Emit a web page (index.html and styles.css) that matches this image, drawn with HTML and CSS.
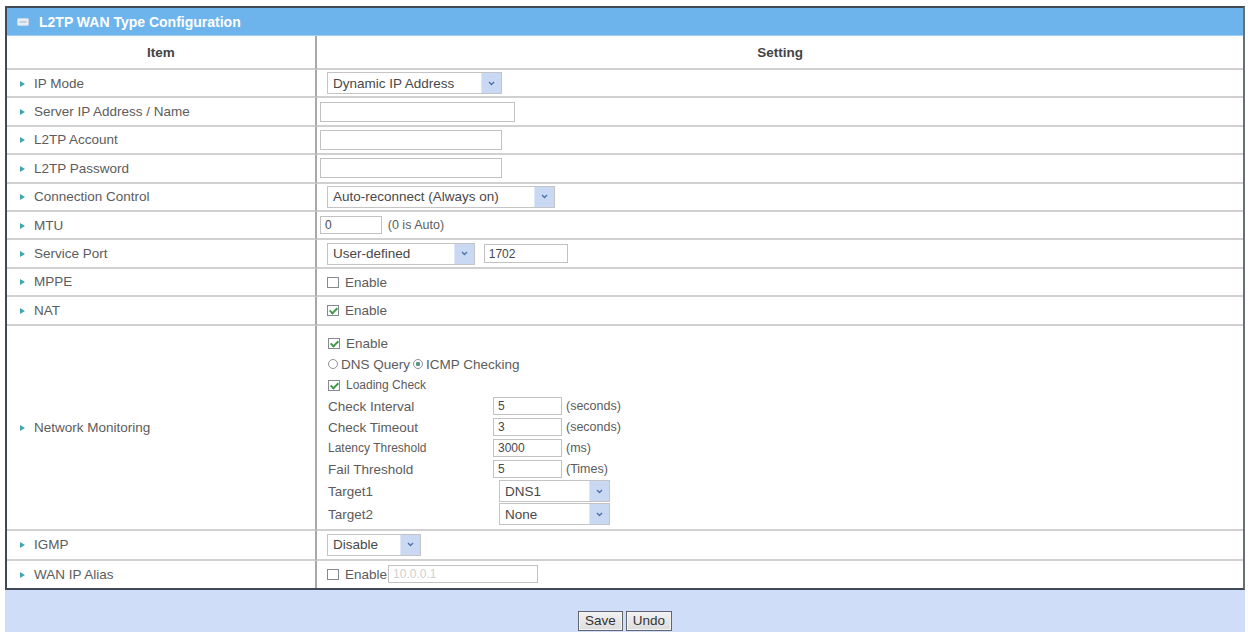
FILE: index.html
```html
<!DOCTYPE html>
<html lang="en">
<head>
    <meta charset="UTF-8">
    <title>L2TP WAN Type Configuration</title>
    <link rel="stylesheet" href="styles.css">
</head>
<body>
    <div class="panel">
        <div class="panel-title">
            <svg class="title-icon" width="12" height="8" viewBox="0 0 12 8">
                <rect x="0.5" y="0.5" width="11" height="7" rx="1" fill="#e8eef6" stroke="#c9d6e6"/>
                <line x1="2.5" y1="4" x2="9.5" y2="4" stroke="#9fb3cc" stroke-width="1"/>
            </svg>
            L2TP WAN Type Configuration
        </div>
        <table class="cfg">
            <thead>
                <tr>
                    <th class="col-item">Item</th>
                    <th>Setting</th>
                </tr>
            </thead>
            <tbody>
                <tr>
                    <td class="item"><span class="tri"></span>IP Mode</td>
                    <td class="set">
                        <span class="sel w-ipmode">
                            <select><option>Dynamic IP Address</option><option>Static IP Address</option></select>
                            <span class="sel-arrow"><svg width="7" height="5" viewBox="0 0 7 5"><path d="M1 1 L3.5 3.5 L6 1" fill="none" stroke="#4d6fae" stroke-width="1.3"/></svg></span>
                        </span>
                    </td>
                </tr>
                <tr>
                    <td class="item"><span class="tri"></span>Server IP Address / Name</td>
                    <td class="set"><input type="text" class="txt w-server"></td>
                </tr>
                <tr>
                    <td class="item"><span class="tri"></span>L2TP Account</td>
                    <td class="set"><input type="text" class="txt w-account"></td>
                </tr>
                <tr>
                    <td class="item"><span class="tri"></span>L2TP Password</td>
                    <td class="set"><input type="password" class="txt w-account"></td>
                </tr>
                <tr>
                    <td class="item"><span class="tri"></span>Connection Control</td>
                    <td class="set">
                        <span class="sel w-conn">
                            <select><option>Auto-reconnect (Always on)</option><option>Connect-on-demand</option><option>Connect Manually</option></select>
                            <span class="sel-arrow"><svg width="7" height="5" viewBox="0 0 7 5"><path d="M1 1 L3.5 3.5 L6 1" fill="none" stroke="#4d6fae" stroke-width="1.3"/></svg></span>
                        </span>
                    </td>
                </tr>
                <tr>
                    <td class="item"><span class="tri"></span>MTU</td>
                    <td class="set"><input type="text" class="txt w-mtu" value="0"> <span class="note">(0 is Auto)</span></td>
                </tr>
                <tr>
                    <td class="item"><span class="tri"></span>Service Port</td>
                    <td class="set">
                        <span class="sel w-port">
                            <select><option>User-defined</option><option>Default</option></select>
                            <span class="sel-arrow"><svg width="7" height="5" viewBox="0 0 7 5"><path d="M1 1 L3.5 3.5 L6 1" fill="none" stroke="#4d6fae" stroke-width="1.3"/></svg></span>
                        </span>
                        <input type="text" class="txt w-portnum" value="1702">
                    </td>
                </tr>
                <tr>
                    <td class="item"><span class="tri"></span>MPPE</td>
                    <td class="set"><label class="chk"><input type="checkbox"> Enable</label></td>
                </tr>
                <tr>
                    <td class="item"><span class="tri"></span>NAT</td>
                    <td class="set"><label class="chk"><input type="checkbox" checked> Enable</label></td>
                </tr>
                <tr class="row-nm">
                    <td class="item"><span class="tri"></span>Network Monitoring</td>
                    <td class="set">
                        <div class="nm">
                            <label class="chk nm-full"><input type="checkbox" checked> Enable</label>
                            <div class="nm-full radios">
                                <label><input type="radio" name="nmtype"> DNS Query</label>
                                <label><input type="radio" name="nmtype" checked> ICMP Checking</label>
                            </div>
                            <label class="chk nm-full small"><input type="checkbox" checked> Loading Check</label>

                            <span>Check Interval</span>
                            <input type="text" class="txt w-nm" value="5">
                            <span class="note">(seconds)</span>

                            <span>Check Timeout</span>
                            <input type="text" class="txt w-nm" value="3">
                            <span class="note">(seconds)</span>

                            <span class="small">Latency Threshold</span>
                            <input type="text" class="txt w-nm" value="3000">
                            <span class="note">(ms)</span>

                            <span>Fail Threshold</span>
                            <input type="text" class="txt w-nm" value="5">
                            <span class="note">(Times)</span>

                            <span>Target1</span>
                            <span class="nm-sel">
                                <span class="sel w-target">
                                    <select><option>DNS1</option><option>DNS2</option><option>Gateway</option><option>Other Host</option></select>
                                    <span class="sel-arrow"><svg width="7" height="5" viewBox="0 0 7 5"><path d="M1 1 L3.5 3.5 L6 1" fill="none" stroke="#4d6fae" stroke-width="1.3"/></svg></span>
                                </span>
                            </span>

                            <span>Target2</span>
                            <span class="nm-sel">
                                <span class="sel w-target">
                                    <select><option>None</option><option>DNS1</option><option>DNS2</option><option>Gateway</option></select>
                                    <span class="sel-arrow"><svg width="7" height="5" viewBox="0 0 7 5"><path d="M1 1 L3.5 3.5 L6 1" fill="none" stroke="#4d6fae" stroke-width="1.3"/></svg></span>
                                </span>
                            </span>
                        </div>
                    </td>
                </tr>
                <tr class="row-igmp">
                    <td class="item"><span class="tri"></span>IGMP</td>
                    <td class="set">
                        <span class="sel w-igmp">
                            <select><option>Disable</option><option>Auto</option></select>
                            <span class="sel-arrow"><svg width="7" height="5" viewBox="0 0 7 5"><path d="M1 1 L3.5 3.5 L6 1" fill="none" stroke="#4d6fae" stroke-width="1.3"/></svg></span>
                        </span>
                    </td>
                </tr>
                <tr class="row-last">
                    <td class="item"><span class="tri"></span>WAN IP Alias</td>
                    <td class="set">
                        <label class="chk"><input type="checkbox"> Enable</label><input type="text" class="txt w-alias" placeholder="10.0.0.1" disabled>
                    </td>
                </tr>
            </tbody>
        </table>
    </div>

    <div class="actions">
        <button type="button" class="btn">Save</button>
        <button type="button" class="btn">Undo</button>
    </div>
</body>
</html>
```

FILE: styles.css
```css
body {
    margin: 0;
    background: #ffffff;
    font-family: "Liberation Sans", Arial, sans-serif;
    font-size: 13.5px;
    color: #5c5c5c;
}

.panel {
    width: 1240px;
    margin: 6px 0 0 5px;
    border: 2px solid #3f4a55;
    border-right-color: #6a6f75;
    box-sizing: border-box;
}

.panel-title {
    display: flex;
    align-items: center;
    height: 28px;
    padding-left: 10px;
    background: #6db4ec;
    border-bottom: 1px solid #9fd0f5;
    box-sizing: border-box;
    color: #ffffff;
    font-size: 14px;
    font-weight: bold;
}

.title-icon {
    margin-right: 10px;
}

.cfg {
    width: 100%;
    border-collapse: separate;
    border-spacing: 0;
}

.cfg th {
    height: 32px;
    padding: 0;
    border-bottom: 2px solid #d0d0d0;
    color: #444444;
    font-size: 13.5px;
    font-weight: bold;
    text-align: center;
}

.cfg th.col-item {
    width: 308px;
    border-right: 2px solid #a8a8a8;
}

.cfg td {
    height: 26.4px;
    padding: 0;
    border-bottom: 2px solid #d0d0d0;
    vertical-align: middle;
    white-space: nowrap;
}

.cfg td.item {
    padding-left: 13px;
    border-right: 2px solid #a8a8a8;
}

.cfg td.set {
    padding-left: 3px;
}

.row-nm td {
    height: 203px;
}

.row-igmp td {
    height: 28px;
}

.row-last td {
    height: 27px;
    border-bottom: none;
}

.tri {
    display: inline-block;
    width: 0;
    height: 0;
    margin-right: 9px;
    border-top: 3.5px solid transparent;
    border-bottom: 3.5px solid transparent;
    border-left: 5px solid #44a6ac;
    vertical-align: 1px;
}

/* selects with the old boxed arrow */
.sel {
    display: inline-flex;
    align-items: stretch;
    height: 22px;
    margin-left: 7px;
    border: 1px solid #c4c4c4;
    box-sizing: border-box;
    background: #ffffff;
    vertical-align: middle;
}

.sel select {
    flex: 1;
    min-width: 0;
    padding: 0 0 0 5px;
    border: none;
    background: transparent;
    appearance: none;
    -webkit-appearance: none;
    font-family: inherit;
    font-size: 13.5px;
    color: #484848;
    outline: none;
}

.sel-arrow {
    display: flex;
    align-items: center;
    justify-content: center;
    width: 19px;
    background: #c9d8f3;
    border-left: 1px solid #dfe7f6;
}

.w-ipmode { width: 175px; }
.w-conn { width: 228px; }
.w-port { width: 148px; }
.w-igmp { width: 94px; }
.w-target { width: 111px; }

/* text boxes */
.txt {
    height: 20px;
    margin: 0;
    padding: 0 4px;
    border: 1px solid #c2c2c2;
    box-sizing: border-box;
    background: #ffffff;
    font-family: inherit;
    font-size: 12px;
    color: #484848;
    vertical-align: middle;
    outline: none;
}

.txt:disabled {
    background: #ffffff;
}

.txt::placeholder {
    color: #cfcfcf;
}

.w-server { width: 195px; }
.w-account { width: 182px; }
.w-mtu { width: 62px; height: 18px; }
.w-portnum { width: 84px; margin-left: 5px; height: 19px; }
.w-nm { width: 69px; height: 18px; }
.w-alias { width: 150px; height: 18px; margin-left: 1px; }

.note {
    margin-left: 2px;
    font-size: 12.5px;
}

/* checkboxes and radios */
.chk {
    display: inline-flex;
    align-items: center;
    margin-left: 7px;
    vertical-align: middle;
}

.chk input,
.radios input {
    appearance: none;
    -webkit-appearance: none;
    position: relative;
    margin: 0 6px 0 0;
    flex: none;
}

.chk input {
    width: 12px;
    height: 11px;
    border: 1px solid #858a90;
    background: #ffffff;
}

.chk input:checked::after {
    content: "";
    position: absolute;
    left: 3px;
    top: 0px;
    width: 3px;
    height: 6px;
    border-right: 2px solid #3e9a4a;
    border-bottom: 2px solid #3e9a4a;
    transform: rotate(45deg);
}

.radios {
    display: flex;
    align-items: center;
}

.radios label {
    display: inline-flex;
    align-items: center;
    margin-right: 3px;
}

.radios input {
    width: 10px;
    height: 10px;
    margin-right: 3px;
    border: 1px solid #8c9196;
    border-radius: 50%;
    background: #ffffff;
}

.radios input:checked {
    background: radial-gradient(circle, #5a9a82 0 2px, #ffffff 2.5px);
}

/* network monitoring block */
.nm {
    display: grid;
    grid-template-columns: 165px 69px auto;
    grid-template-rows: repeat(7, 21px) 23px 23px;
    align-items: center;
    padding: 6px 0 2px 8px;
}

.nm .chk {
    margin-left: 0;
}

.nm-full {
    grid-column: 1 / -1;
}

.nm-sel {
    grid-column: 2 / -1;
}

.nm-sel .sel {
    margin-left: 6px;
}

.nm .note {
    margin-left: 4px;
}

.small {
    font-size: 12px;
}

/* footer with the buttons */
.actions {
    display: flex;
    justify-content: center;
    gap: 3px;
    width: 1240px;
    height: 46px;
    margin-left: 5px;
    padding-top: 21px;
    box-sizing: border-box;
    background: #d0ddf9;
}

.btn {
    height: 20px;
    padding: 0 6px;
    border: 1px solid #5f6670;
    box-shadow: inset 0 0 0 1px #f4f4f4;
    background: linear-gradient(#f2f2f2, #dcdcdc);
    font-family: inherit;
    font-size: 13.5px;
    color: #333333;
    cursor: pointer;
}
```
